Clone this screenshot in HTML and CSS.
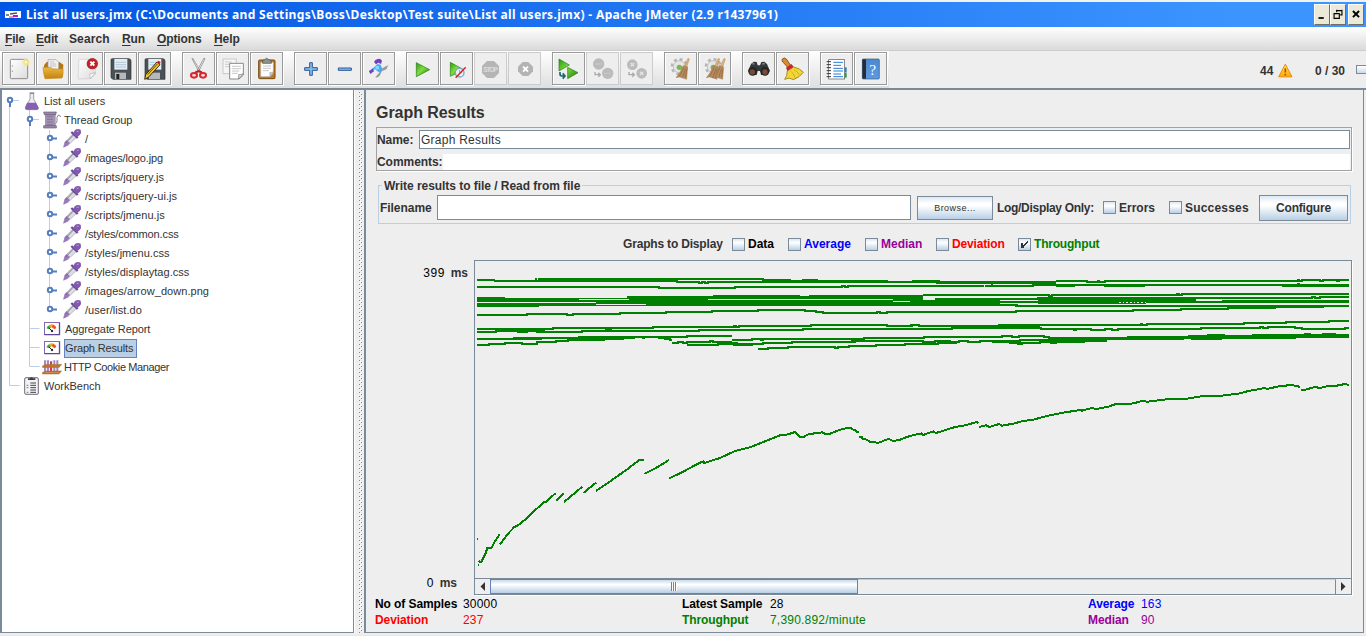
FILE: index.html
```html
<!DOCTYPE html>
<html lang="en">
<head>
<meta charset="utf-8">
<title>Apache JMeter</title>
<link rel="stylesheet" href="styles.css">
</head>
<body>
<svg class="defs" width="0" height="0">
  <defs>
    <linearGradient id="green" x1="0" y1="0" x2="1" y2="1"><stop offset="0" stop-color="#2c9a10"/><stop offset=".45" stop-color="#7fdc3c"/><stop offset="1" stop-color="#1c7a0c"/></linearGradient>
    <linearGradient id="gold" x1="0" y1="0" x2="0" y2="1"><stop offset="0" stop-color="#eab844"/><stop offset="1" stop-color="#c4820c"/></linearGradient>
    <linearGradient id="paper" x1="0" y1="0" x2="1" y2="1"><stop offset="0" stop-color="#fff"/><stop offset="1" stop-color="#dcdcdc"/></linearGradient>
    <linearGradient id="blue" x1="0" y1="0" x2="0" y2="1"><stop offset="0" stop-color="#4a8ad0"/><stop offset="1" stop-color="#5e9ae4"/></linearGradient>
    <linearGradient id="yellow" x1="0" y1="0" x2="0" y2="1"><stop offset="0" stop-color="#ffef50"/><stop offset="1" stop-color="#ffa500"/></linearGradient>
    <pattern id="dots" width="4" height="4" patternUnits="userSpaceOnUse"><path d="M0 0h1v1H0zM2 2h1v1H2z" fill="#7a8a99"/><path d="M1 1h1v1H1zM3 3h1v1H3z" fill="#fff"/></pattern>
    <symbol id="dropper" viewBox="189 120 60 57" overflow="visible">
      <path d="M191 170l4-14 26-27 11 11-27 25z" fill="#dcdce2" stroke="#a9a5b8" stroke-width="2"/>
      <path d="M190 173l4-16 6-7 10 9-8 8z" fill="#9a78bd"/>
      <path d="M197 159l23-24" stroke="#77747f" stroke-width="3"/>
      <path d="M214 126l19 18" stroke="#6a4a9c" stroke-width="7"/>
      <path d="M219 130l6-10q8-5 17-1 3 9-2 15l-9 8z" fill="#8359ad"/><path d="M230 124l6 0" stroke="#b093cf" stroke-width="4"/>
    </symbol>
    <symbol id="gauge" viewBox="132 210 60 57">
      <rect x="133.500" y="217.500" width="45" height="36" fill="#fff" stroke="#8467b3" stroke-width="3"/>
      <path d="M178.500 218v36h-45" fill="none" stroke="#624699" stroke-width="4"/>
      <path d="M139 235q3-8 9-10l6 7-7 6z" fill="#39b54a"/><path d="M147 225q8-4 16 0l-5 7h-7z" fill="#f5a623"/><path d="M160 224q8 3 9 10l-6 4-8-7z" fill="#f2512e"/>
      <path d="M146 233l10 10" stroke="#222" stroke-width="3"/><circle cx="156" cy="243" r="3.500" fill="#222"/>
    </symbol>
    <symbol id="gearbroom" viewBox="372 156 99 99">
      <circle cx="418" cy="200" r="22" fill="none" stroke="#b5b5b5" stroke-width="8" stroke-dasharray="9 8.280"/>
      <circle cx="418" cy="200" r="18" fill="#e6e6e6" stroke="#c0c0c0" stroke-width="3"/>
      <circle cx="418" cy="202" r="8" fill="#72bd4a"/>
    </symbol>
    <symbol id="brush" viewBox="0 0 45 66">
      <path d="M38 1l4 2-8 25-8-2z" fill="#ddb074" stroke="#9d7447"/>
      <path d="M23 23l14 4-3 37-22-7-10 2q13-14 21-36z" fill="#b88b5d" stroke="#8c6640"/>
      <path d="M26 29L12 55M31 32l-9 25M34 34l-4 25" stroke="#8b6644" stroke-width="2"/>
    </symbol>
  </defs>
</svg>

<header class="titlebar">
  <svg class="appicon" viewBox="0 0 16 8"><rect width="16" height="7" fill="#fff"/><path d="M1 4h3M5 3l7-1" stroke="#556" stroke-width="1.500"/><path d="M4 6h5" stroke="#e03060"/><path d="M8 5h5" stroke="#c018c0" stroke-width="2"/></svg>
  <span class="wintitle">List all users.jmx (C:\Documents and Settings\Boss\Desktop\Test suite\List all users.jmx) - Apache JMeter (2.9 r1437961)</span>
  <div class="winbtns">
    <svg viewBox="0 0 16 21"><path d="M4 14.500h6" stroke="#000" stroke-width="2"/></svg>
    <svg viewBox="0 0 16 21"><path d="M6 6h7M6.500 5v3M12.500 5v6h-2M3 9.500h7M3.500 9v6h6V9" fill="none" stroke="#000" stroke-width="1.300"/></svg>
    <svg class="close" viewBox="0 0 16 21"><path d="M4.500 6.500l7 7m0-7l-7 7" stroke="#000" stroke-width="2.200"/></svg>
  </div>
</header>

<nav class="menubar"><span class="m1"><u>F</u>ile</span><span class="m2"><u>E</u>dit</span><span class="m3">Search</span><span class="m4"><u>R</u>un</span><span class="m5"><u>O</u>ptions</span><span class="m6"><u>H</u>elp</span></nav>

<section class="toolbar">
  <div class="tools">
    <div class="toolgroup">
      <div class="tool"><svg viewBox="6 156 99 99"><rect x="31" y="178" width="52" height="58" rx="3" fill="url(#paper)" stroke="#777" stroke-width="2.500"/><path d="M37 196v4m0 12v4" stroke="#999" stroke-width="3"/><circle cx="78" cy="187" r="11" fill="#f5ea80" opacity=".75"/><circle cx="78" cy="187" r="5" fill="#fffde0" stroke="#edda3c" stroke-width="2"/></svg></div>
      <div class="tool"><svg viewBox="108 156 99 99"><path d="M132 196l8-10h38l12 8-2 38h-54z" fill="#b57612"/><path d="M144 206v-27h24l8 8v22z" fill="#f4f4f4" stroke="#999" stroke-width="2"/><path d="M149 186h14M149 192h20M149 198h20" stroke="#aaa" stroke-width="2"/><path d="M129 202h23l6 5h31q2 13-3 27l-51 2q-5-15-6-34z" fill="url(#gold)" stroke="#c88d20" stroke-width="2"/></svg></div>
      <div class="tool"><svg viewBox="210 156 99 99"><path d="M237 178h47l2 45-14 13-38 1z" fill="url(#paper)" stroke="#ccc" stroke-width="2"/><path d="M286 218l-17 4 2 14z" fill="#fff" stroke="#aaa" stroke-width="2"/><circle cx="277" cy="191" r="17" fill="#a83438"/><circle cx="277" cy="191" r="14" fill="#cb1d20"/><path d="M271 185l12 12m0-12l-12 12" stroke="#fff" stroke-width="6"/></svg></div>
      <div class="tool"><svg viewBox="312 156 99 99"><path d="M333 179q0-3 4-3h50q6 1 6 7v55h-54l-6-5z" fill="#4b5256" stroke="#2e3235" stroke-width="2"/><rect x="343" y="177" width="39" height="32" fill="#e2edf5"/><path d="M347 187h31M347 194h31M347 201h31" stroke="#9cb9ce" stroke-width="2"/><rect x="345" y="218" width="33" height="19" fill="#b5b9bb"/><rect x="349" y="222" width="9" height="15" fill="#222"/></svg></div>
      <div class="tool"><svg viewBox="414 156 99 99"><path d="M435 179q0-3 4-3h50q6 1 6 7v55h-54l-6-5z" fill="#4b5256" stroke="#2e3235" stroke-width="2"/><rect x="445" y="177" width="39" height="32" fill="#e2edf5"/><path d="M449 187h31M449 194h31" stroke="#9cb9ce" stroke-width="2"/><rect x="447" y="218" width="33" height="19" fill="#b5b9bb"/><path d="M434 238l3-14 34-38 9 8-35 38z" fill="#f1c32c" stroke="#392c14" stroke-width="3"/><path d="M443 224l29-32" stroke="#6b5116" stroke-width="3"/><path d="M470 187l6-5 6 5-4 7z" fill="#d71e24"/></svg></div>
    </div>
    <div class="toolgroup">
      <div class="tool"><svg viewBox="546 156 99 99"><path d="M576 176l22 42 4-3-24-41zM615 176l-21 42-4-3 22-41z" fill="#f6f6f6" stroke="#777" stroke-width="2"/><ellipse cx="582" cy="226" rx="9" ry="7" fill="#f6dede" stroke="#dd252b" stroke-width="6"/><ellipse cx="609" cy="226" rx="9" ry="7" fill="#f6dede" stroke="#dd252b" stroke-width="6"/><path d="M586 217l10-4 10 4" fill="none" stroke="#cc171c" stroke-width="6"/></svg></div>
      <div class="tool"><svg viewBox="648 156 99 99"><path d="M669 177h40v44h-40z" fill="#f5f5f5" stroke="#b5b5b5" stroke-width="2"/><path d="M675 186h20M675 193h12M675 200h12" stroke="#ccc" stroke-width="3"/><path d="M689 190h41v35l-13 12h-28z" fill="#fff" stroke="#888" stroke-width="3"/><path d="M696 199h27M696 206h27M696 213h22M696 220h17" stroke="#aaa" stroke-width="2"/><path d="M730 222l-14 2v13z" fill="#ddd" stroke="#777" stroke-width="2"/></svg></div>
      <div class="tool"><svg viewBox="750 156 99 99"><rect x="776" y="180" width="49" height="56" rx="3" fill="#c17b19" stroke="#774a0b" stroke-width="3"/><path d="M782 187h38v32l-10 11h-28z" fill="#fff" stroke="#a9a9a9" stroke-width="2"/><path d="M789 198h24M789 205h24M789 212h18" stroke="#aaa" stroke-width="2"/><path d="M820 216l-11 2 1 12z" fill="#ccc" stroke="#777"/><path d="M788 190v-8q3-3 6-3 6-9 12 0 6 0 8 5v6z" fill="#90918b" stroke="#484946" stroke-width="2"/></svg></div>
    </div>
    <div class="toolgroup">
      <div class="tool"><svg viewBox="12 156 99 99"><path d="M59 188h8v15h15v8H67v15h-8v-15H44v-8h15z" fill="#8db8e6" stroke="#285a9b" stroke-width="3"/></svg></div>
      <div class="tool"><svg viewBox="114 156 99 99"><path d="M145 204h39v7h-39z" fill="#8db8e6" stroke="#285a9b" stroke-width="3"/></svg></div>
      <div class="tool"><svg viewBox="216 156 99 99"><path d="M256 232l14-17 8-11 17-9-6 13-14 6-5 12q-7 9-14 6z" fill="#999"/><path d="M252 186q3-8 11-9 9-2 13 5l-3 10-8-4-7 5z" fill="#7341bd"/><path d="M237 213l17-13 8-8 10 2 5 13-5 12-11-6-6-6-13 12z" fill="#4aa8f6"/><path d="M237 214l11-8 4 8-11 8z" fill="#7541bd"/><circle cx="262" cy="203" r="6" fill="#83d8ff"/></svg></div>
    </div>
    <div class="toolgroup">
      <div class="tool"><svg viewBox="348 156 99 99"><path d="M379 188l40 21-40 21z" fill="url(#green)" stroke="#247d17" stroke-width="2"/></svg></div>
      <div class="tool"><svg viewBox="450 156 99 99"><path d="M481 187l40 22-40 20z" fill="url(#green)" stroke="#247d17" stroke-width="2"/><circle cx="509" cy="218" r="13" fill="#eaf2fc" stroke="#7da5cd" stroke-width="4"/><path d="M509 210v8h7" fill="none" stroke="#678" stroke-width="2"/><path d="M497 233l30-31" stroke="#db1721" stroke-width="4"/></svg></div>
      <div class="tool off"><svg viewBox="552 156 99 99"><path d="M591 183h21l15 15v21l-15 15h-21l-15-15v-21z" fill="#b5b5b5"/><text x="601.500" y="216" text-anchor="middle" textLength="44" class="stoptext">STOP</text></svg></div>
      <div class="tool off"><svg viewBox="654 156 99 99"><path d="M698 186h17l14 14v14l-14 14h-17l-14-14v-14z" fill="#b3b3b3"/><path d="M699 200l15 15m0-15l-15 15" stroke="#fff" stroke-width="6"/></svg></div>
    </div>
    <div class="toolgroup">
      <div class="tool"><svg viewBox="36 156 99 99"><path d="M57 177l31 18-31 18zM83 202l31 16-31 18z" fill="url(#green)" stroke="#247d17" stroke-width="2"/><path d="M60 216v7q0 5 6 5h8m-6-8l7 8-7 8" fill="none" stroke="#17686f" stroke-width="5"/></svg></div>
      <div class="tool off"><svg viewBox="138 156 99 99"><circle cx="176" cy="192" r="17" fill="#bbb"/><circle cx="203" cy="220" r="17" fill="#bbb"/><path d="M166 192h20M193 220h20" stroke="#ccc" stroke-width="4" stroke-dasharray="4 2"/><path d="M165 216v8h16m-6-6l6 6-6 6" fill="none" stroke="#aaa" stroke-width="4"/></svg></div>
      <div class="tool off"><svg viewBox="240 156 99 99"><circle cx="277" cy="194" r="16" fill="#bbb"/><circle cx="305" cy="220" r="16" fill="#bbb"/><path d="M272 189l10 10m0-10l-10 10M300 215l10 10m0-10l-10 10" stroke="#e3e3e3" stroke-width="4"/><path d="M267 216v8h16m-6-6l6 6-6 6" fill="none" stroke="#aaa" stroke-width="4"/></svg></div>
    </div>
    <div class="toolgroup">
      <div class="tool"><svg viewBox="372 156 99 99"><use href="#gearbroom" x="372" y="156" width="99" height="99"/><use href="#brush" x="406" y="174" width="45" height="66"/></svg></div>
      <div class="tool"><svg viewBox="474 156 99 99"><use href="#gearbroom" x="474" y="156" width="99" height="99"/><use href="#brush" x="497" y="174" width="45" height="66"/><use href="#brush" x="514" y="174" width="45" height="66"/></svg></div>
    </div>
    <div class="toolgroup">
      <div class="tool"><svg viewBox="606 156 99 99"><path d="M633 192l8-7 9 1 3 10h7l4-10 9-1 8 7 9 21-15 12h-12l-3-12h-7l-3 12h-12l-14-12z" fill="#34383b"/><circle cx="638" cy="214" r="13" fill="#242424"/><circle cx="675" cy="214" r="13" fill="#242424"/><circle cx="637" cy="216" r="8" fill="#7a4b34"/><circle cx="675" cy="216" r="8" fill="#7a4b34"/><path d="M637 191l6 1M667 192l7-1" stroke="#8a8d90" stroke-width="4"/></svg></div>
      <div class="tool"><svg viewBox="708 156 99 99"><path d="M727 177q6-6 12 0l14 21-8 6-19-21z" fill="#d58d34" stroke="#975516" stroke-width="3"/><path d="M742 213l19-12q19 4 29 16-11 15-30 22-12-9-26-1 8-10 8-25z" fill="#f0d638" stroke="#aa8d13" stroke-width="3"/><path d="M738 203l16-11 7 8-19 13z" fill="#c52927"/><path d="M753 214q8 6 12 19m-3-25q10 6 16 17" fill="none" stroke="#b99d1d" stroke-width="2"/></svg></div>
    </div>
    <div class="toolgroup">
      <div class="tool"><svg viewBox="840 156 99 99"><path d="M910 202h10v15h-10z" fill="#2f78df"/><path d="M910 218h10v15h-10z" fill="#18ad2b"/><rect x="866" y="179" width="48" height="58" fill="#fff" stroke="#555" stroke-width="2"/><path d="M880 187h29M880 196h23M880 205h29M880 213h29M880 222h23M880 230h29" stroke="#2b7bd6" stroke-width="3"/><path d="M860 185h13M860 194h13M860 203h13M860 212h13M860 221h13M860 230h13" stroke="#333" stroke-width="3"/></svg></div>
      <div class="tool"><svg viewBox="942 156 99 99"><rect x="967" y="177" width="51" height="60" rx="3" fill="url(#blue)" stroke="#345a80" stroke-width="2"/><path d="M967 178h11v58h-11z" fill="#292d32"/><text x="998" y="225" text-anchor="middle" class="helptext">?</text></svg></div>
    </div>
  </div>
  <div class="status"><span class="s1">44</span><svg class="warn" viewBox="233 189 45 44"><path d="M255 192l20 38h-40z" fill="url(#yellow)" stroke="#e88b10" stroke-width="3" stroke-linejoin="round"/><path d="M255 204v13m0 4v5" stroke="#b44d12" stroke-width="5"/></svg><span class="s2">0 / 30</span><i class="lamp"></i></div>
</section>

<main class="workspace">
  <aside class="tree">
    <svg class="guides" viewBox="0 90 352 542">
      <path d="M9.500 104v281.500h10M29.500 109v257.500h10M29.500 328.500h10M29.500 347.500h10M49.500 130v178M12 100.500h7M32 119.500h7" fill="none" stroke="#b8cfe5"/>
      <g fill="#fff" stroke="#557fbf" stroke-width="2"><path d="M10 103v4M30 122v4"/><circle cx="10" cy="100" r="2.200"/><circle cx="30" cy="119" r="2.200"/>
      <path d="M53 138.500h4M53 157.500h4M53 176.500h4M53 195.500h4M53 214.500h4M53 233.500h4M53 252.500h4M53 271.500h4M53 290.500h4M53 309.500h4"/>
      <circle cx="50" cy="138" r="2.200"/><circle cx="50" cy="157" r="2.200"/><circle cx="50" cy="176" r="2.200"/><circle cx="50" cy="195" r="2.200"/><circle cx="50" cy="214" r="2.200"/><circle cx="50" cy="233" r="2.200"/><circle cx="50" cy="252" r="2.200"/><circle cx="50" cy="271" r="2.200"/><circle cx="50" cy="290" r="2.200"/><circle cx="50" cy="309" r="2.200"/></g>
    </svg>
    <div class="row l0"><svg viewBox="72 6 60 57"><path d="M90 10v17L76 53q-1 6 5 6h29q6-1 4-7l-13-25V10z" fill="#eeebf4" stroke="#777382" stroke-width="2"/><path d="M81 38h27l8 15q0 6-5 6H80q-6-3-4-8z" fill="#8660b2"/><path d="M89 9h14" stroke="#777" stroke-width="3"/></svg><span>List all users</span></div>
    <div class="row l1"><svg viewBox="126 63 60 57"><path d="M135 72h32v38h-32z" fill="#a293b1"/><path d="M131 66h38l-2 8h-34zM131 107h38v7h-38z" fill="#9a8aa8" stroke="#665772" stroke-width="2"/><path d="M141 80h18M141 88h18M141 96h18M141 104h18" stroke="#786888" stroke-width="2"/><path d="M166 101q5-1 5-9V82q2-9 8-6l3 5" fill="none" stroke="#898191" stroke-width="3"/></svg><span>Thread Group</span></div>
    <div class="row l2"><svg><use href="#dropper"/></svg><span>/</span></div>
    <div class="row l2 tight"><svg><use href="#dropper"/></svg><span>/images/logo.jpg</span></div>
    <div class="row l2"><svg><use href="#dropper"/></svg><span>/scripts/jquery.js</span></div>
    <div class="row l2"><svg><use href="#dropper"/></svg><span>/scripts/jquery-ui.js</span></div>
    <div class="row l2"><svg><use href="#dropper"/></svg><span>/scripts/jmenu.js</span></div>
    <div class="row l2 tight"><svg><use href="#dropper"/></svg><span>/styles/common.css</span></div>
    <div class="row l2"><svg><use href="#dropper"/></svg><span>/styles/jmenu.css</span></div>
    <div class="row l2"><svg><use href="#dropper"/></svg><span>/styles/displaytag.css</span></div>
    <div class="row l2"><svg><use href="#dropper"/></svg><span>/images/arrow_down.png</span></div>
    <div class="row l2"><svg><use href="#dropper"/></svg><span>/user/list.do</span></div>
    <div class="row l1 gauge"><svg><use href="#gauge"/></svg><span>Aggregate Report</span></div>
    <div class="row l1 gauge"><svg><use href="#gauge"/></svg><span class="selected">Graph Results</span></div>
    <div class="row l1 cookie"><svg viewBox="126 324 60 57"><path d="M135 331v34M144 331v34M163 331v34M172 331v34" stroke="#9d88c2" stroke-width="6"/><path d="M153 334v34" stroke="#dc3055" stroke-width="6"/><path d="M139 329v32M158 329v32M176 329v32" stroke="#d9d7e5" stroke-width="2"/><path d="M127 350l10-5h45l-6 6h-49M127 369l10-5h45l-6 7h-49" fill="#cf8a45" stroke="#b5702f" stroke-width="4"/></svg><span>HTTP Cookie Manager</span></div>
    <div class="row l0"><svg viewBox="72 381 60 57"><rect x="74" y="383" width="41" height="50" rx="4" fill="#f3f2f5" stroke="#746c7c" stroke-width="3"/><path d="M84 390h22v-5h-7l-4-4-5 4h-6z" fill="#3d3d42"/><path d="M91 399h17M91 406h17M91 413h17M91 420h17M91 427h17" stroke="#444" stroke-width="3"/><path d="M80 406h5M80 413h5M80 427h5" stroke="#3f9c50" stroke-width="3"/></svg><span>WorkBench</span></div>
  </aside>
  <div class="splitter"><svg class="grip"><rect width="4" height="541" fill="url(#dots)"/></svg></div>
  <section class="panel">
    <h1>Graph Results</h1>
    <div class="namebox">
      <div class="namerow"><label>Name:</label><div class="field">Graph Results</div></div>
      <div class="commentrow"><label>Comments:</label><div></div></div>
    </div>
    <div class="filegroup">
      <span class="legend">Write results to file / Read from file</span>
      <label>Filename</label><div class="fileinput"></div>
      <div class="btn browse">Browse...</div>
      <b class="logonly">Log/Display Only:</b>
      <i class="check"></i><b class="errors">Errors</b>
      <i class="check"></i><b class="succ">Successes</b>
      <div class="btn configure">Configure</div>
    </div>
    <div class="series">
      <b class="g0">Graphs to Display</b>
      <i class="check"></i><b class="g1">Data</b>
      <i class="check"></i><b class="g2">Average</b>
      <i class="check"></i><b class="g3">Median</b>
      <i class="check"></i><b class="g4">Deviation</b>
      <i class="check"><svg viewBox="0 0 11 11"><path d="M2 4h2v2h1V5h1V4h1V3h1V2h1v2H8v1H7v1H6v1H5v2H2z" fill="#333"/></svg></i><b class="g5">Throughput</b>
    </div>
    <div class="graph">
      <div class="axis"><div>399 <b>ms</b></div><div class="zero">0 <b>ms</b></div></div>
      <div class="plot">
        <svg class="lines" viewBox="475 261 876 317">
          <g transform="translate(470 255) scale(.333333)" fill="none" stroke="#008000" stroke-width="6">
            <path d="M21 75H72V78M195 72h6M204 72H879V75H960V78H998V75H1040V78H1250V81M72 78H620V81H686V84H695V81H705V84H714V81H1325"/>
            <path d="M21 96H567V99H795V96H1116V93H1125V96H1134V93H1350"/>
            <path d="M21 126H105V129H471V123H729V120H990V123H1016V120H1325V153H207V156H21z" fill="#008000" stroke="none"/>
            <path d="M327 133.500h149M714 133.500h554M21 142.500h357M378 148.500h150M1268 139.500h56" stroke="#eee" stroke-width="3"/>
            <path d="M21 180H170V177H291V180H309V177H450V174H588V171H726V168H864V165H1005V168H1038V171H1058V174H1220V171H1230V174H1250V171H1320"/>
            <path d="M21 222H249V219H549V216H792V213H798V216H807V213H1023V210H1250V213H1325V210H1340M21 231H78V228H144V231H171V228H201V231H336V228H687V225H998V222H1350M78 227h148M404 222h22"/>
            <path d="M21 252H212V249M129 249H327V246H650V243H785M21 270H57V267H105V264H155V267H165V267H201V261H258V258H294V255H402V252H459V249H495M327 249H417M515 249h10M564 249H585V252H600V255H605M606 264H624V261H640V264H650V261H720V258H730V261H785M650 270H745V267H793V270H845V267H878V264H966V261H1156V258H1350M744 264h57v3h65M785 255H845V252H873V255H880V252H1182V249H1320M1142 255h40v3M864 282H894V279H954V276H1030V273V276H1095V279H1103V276H1137V273H1218V270H1305V267H1350"/>
          </g>
          <g transform="translate(910 255) scale(.333333)" fill="none" stroke="#008000" stroke-width="6">
            <path d="M0 81H438M6 78h84M78 84h360M438 78H530V81H563V78H567V81H585V78H1165V75H1168V78H1176V75H1230V78H1238V75H1282V78H1287V75H1317"/>
            <path d="M0 93H222M225 93H370V90H385V90H1165V87H1168V90H1173V90H1317M243 90h6M385 88h53M438 93h57M582 93h123M1173 91h144M1116 93h201"/>
            <path d="M0 129h39M0 126h39M0 123h39M39 120H417V123H426V120H802V117H808V120H816V117H1317M75 132H385V129H1205V126H1214V129H1230V126H1317"/>
            <path d="M0 132h39v3h231v3h115v-9h473v9h78v-3h381v9h-610v3H385v-3H270v3h51v9h-6v-6H0z" fill="#008000" stroke="none"/>
            <path d="M385 133h473M270 141h1047M936 138h381M0 144h270M0 150H321V153H1317"/>
            <path d="M627 144h83" stroke="#eee" stroke-width="3" stroke-dasharray="5 6"/>
            <path d="M0 171H318V168H669V165H813V162H954V159H1098M954 156h285V153"/>
            <path d="M0 210H27V213H267V210H693V207H697V210H711V207H1002V204H1128V201H1257V198H1317M0 222H126V219H393V222H492V225H498V222H543V225H585V222H605V225H623V222H873V219H1050V216H1059V219H1074V216H1155V219H1176V222H1305V219H1317M126 216h264M378 213h12"/>
            <path d="M0 249H42V246H275V243H306V246H327V243H402V246H417V249H654V246H837V243H895V240H942V243H1030V240H1317M417 252H820V249H843V246H1317M843 252h90v-3h225M654 249h189M933 243h384M1182 237h20M1236 237h42M252 243v3"/>
            <path d="M0 258H38V261H75V258H120V261H147V258H174V261H210V258H330V255H422V258H587V252M0 267H85V264H140M246 261h54v3h90v-3h33v3h15v-3h87M321 267h18"/>
          </g>
          <g transform="translate(350 420) scale(.333333)" fill="none" stroke="#008000" stroke-width="6">
            <path d="M381 357h4M384 435h4M387 423l3 3h4l7-15 6-11 5-16h12l8-15 17-27M450 373L474 341L492 322L504 316L530 295L558 268L582 247L588 246L617 219M619 243l22-22M642 246l55-46M700 219l38-31M738 213L776 187L830 149L868 120H882M883 162l38-20 36-22M957 175L990 160L1044 131L1060 124L1063 129L1110 114L1155 93L1200 82L1240 66L1290 46L1315 43L1335 36L1340 40L1350 50H1362L1375 43L1400 39L1417 37L1425 41H1440L1465 31L1490 24L1503 24"/>
          </g>
          <g transform="translate(850 370) scale(.333333)" fill="none" stroke="#008000" stroke-width="6">
            <path d="M3 175L10 179H16L22 187H26M27 200H35L38 207L50 209L60 215H70L82 219L94 215L104 211L117 207L130 213L150 209L165 203L190 195L215 190L219 195L250 184L258 189L290 179L315 171L350 165L380 156L385 159M387 170H392L408 166L418 171L448 162L456 167L490 161L515 154L550 149L590 138L640 128L690 120L696 122L725 114L740 117L775 110L795 103H830L855 99L875 93L893 95L925 91L965 86H1010L1060 78L1115 77L1165 71L1195 63L1245 54L1252 57L1285 49L1305 47L1325 45L1345 49L1350 53M1353 60H1362L1395 51L1410 54L1435 48L1460 47L1485 42L1496 45"/>
          </g>
        </svg>
        <div class="scrollbar"><span class="arrow"><svg viewBox="0 0 15 15"><path d="M10 3v9L5.500 7.500z" fill="#333"/></svg></span><span class="thumb"><i></i></span><span class="track"></span><span class="arrow"><svg viewBox="0 0 15 15"><path d="M5 3v9l4.500-4.500z" fill="#333"/></svg></span></div>
      </div>
    </div>
    <div class="stats">
      <b>No of Samples</b><span>30000</span><b>Latest Sample</b><span>28</span><b class="avg">Average</b><span class="avg">163</span>
      <b class="dev">Deviation</b><span class="dev">237</span><b class="thr">Throughput</b><span class="thr">7,390.892/minute</span><b class="med">Median</b><span class="med">90</span>
    </div>
  </section>
</main>
</body>
</html>
```
FILE: styles.css
```css
* { box-sizing: border-box; }
body { margin: 0; width: 1366px; height: 636px; overflow: hidden; background: #eee; color: #333; font: 12px "Liberation Sans", Arial, sans-serif; white-space: nowrap; border-bottom: 1px solid #ece9d8; }
.defs { position: absolute; }
svg { display: block; flex: none; }

.titlebar { height: 27px; border-top: 2px solid #f3f3ee; background: linear-gradient(90deg, #0054e3, #3c94ff 90%); display: flex; align-items: center; padding-left: 5px; }
.appicon { width: 16px; height: 8px; }
.wintitle { margin-left: 5px; font: bold 12px "Noto Sans", sans-serif; color: #fff; letter-spacing: .345px; line-height: 24px; }
.winbtns { margin-left: auto; display: flex; padding-right: 2px; }
.winbtns svg { width: 16px; height: 21px; background: #ece9d8; border: 1px solid; border-color: #fff #716f64 #716f64 #fff; }
.winbtns .close { margin-left: 2px; }

.menubar { height: 24px; background: linear-gradient(#fff, #dadada); border-bottom: 1px solid #ccc; display: flex; align-items: center; font-weight: bold; padding-left: 5px; }
.menubar span { letter-spacing: -.1px; }
.menubar .m1, .menubar .m2 { letter-spacing: -.2px; }
.menubar .m3 { letter-spacing: .1px; }
.menubar u { text-underline-offset: 2px; }
.m1 { width: 31px; } .m2 { width: 33px; } .m3 { width: 53px; } .m4 { width: 35px; } .m5 { width: 57px; }

.toolbar { height: 37px; display: flex; }
.tools { width: 889px; height: 37px; display: flex; gap: 10px; padding: 1px 0 0 2px; background: linear-gradient(#fff, #dedede); }
.toolgroup { display: flex; gap: 1px; }
.toolgroup + .toolgroup { margin-left: 1px; }
.tool { width: 33px; height: 33px; background: #eee; box-shadow: inset 0 0 0 1px #999, inset 2px 2px 0 #fff, 1px 1px 0 #fff; }
.tool.off { box-shadow: inset 0 0 0 1px #ccc; }
.tool svg { width: 33px; height: 33px; }
.stoptext { font: bold 20px "Liberation Sans", sans-serif; fill: #ddd; }
.helptext { font: 46px "Liberation Serif", serif; fill: #fff; }
.status { flex: 1; display: flex; align-items: center; font-weight: bold; padding-left: 371px; padding-top: 3px; }
.status .warn { width: 15px; height: 15px; margin-top: -1px; }
.s1 { width: 18px; }
.s2 { width: 41px; margin-left: 22px; }
.lamp { width: 10px; height: 9px; margin-top: -4px; border: 1px solid #7a8a99; border-right: 0; background: linear-gradient(#fff, #c9dbea); }

.workspace { height: 545px; display: flex; border-top: 2px solid #7a8a99; }
.tree { position: relative; width: 354px; border-left: 2px solid #7a8a99; border-right: 1px solid #7a8a99; border-bottom: 1px solid #7a8a99; background: #fff; padding-top: 2px; }
.guides { position: absolute; left: -2px; top: 0; width: 352px; height: 542px; }
.row { position: relative; height: 19px; display: flex; align-items: center; font-size: 11px; letter-spacing: 0; }
.row svg { width: 20px; height: 19px; overflow: visible; }
.row span { height: 19px; line-height: 19px; }
.l0 { padding-left: 22px; } .l1 { padding-left: 40px; } .l2 { padding-left: 61px; letter-spacing: .05px; }
.l1 span, .l2 span { margin-left: 2px; }
.gauge { padding-left: 42px; letter-spacing: -.1px; }
.tight { letter-spacing: -.13px; }
.cookie { letter-spacing: -.38px; }
.gauge span { margin-left: 0; padding-left: 1px; }
.row .selected { width: 73px; background: #b8cfe5; box-shadow: inset 0 0 0 1px #6382bf; letter-spacing: -.15px; }

.splitter { width: 10px; padding: 2px 0 0 4px; border-left: 1px solid #fff; }
.grip { width: 4px; height: 541px; }
.panel { width: 1000px; border-left: 2px solid #7a8a99; border-right: 1px solid #7a8a99; border-bottom: 1px solid #7a8a99; padding: 0 11px 0 10px; }
.panel h1 { margin: 0; height: 37px; padding-top: 13px; font: bold 16px/19px "Liberation Sans", sans-serif; letter-spacing: -.05px; }
.namebox { height: 44px; border: 1px solid #a2a2a2; padding: 2px 1px 1px 0; box-shadow: 1px 1px 0 #fff; }
.namebox label, .filegroup label { font-weight: bold; letter-spacing: -.05px; }
.namerow { display: flex; height: 19px; align-items: center; }
.namerow label { width: 42px; }
.field { flex: 1; height: 19px; background: #fff; border: 1px solid #7a8a99; padding-left: 1px; line-height: 18px; letter-spacing: .25px; }
.commentrow { display: flex; height: 16px; margin-top: 5px; align-items: center; }
.commentrow label { width: 66px; }
.commentrow div { flex: 1; height: 16px; background: #fff; }
.filegroup { position: relative; margin: 14px 1px 0 2px; height: 39px; border: 1px solid #b8cfe5; display: flex; align-items: center; padding: 6px 0 0 1px; }
.legend { position: absolute; left: 3px; top: -8px; padding: 0 2px; background: #eee; font-weight: bold; line-height: 16px; letter-spacing: -.04px; }
.filegroup label { width: 57px; }
.fileinput { width: 474px; height: 25px; background: #fff; border: 1px solid #7a8a99; }
.btn { display: flex; align-items: center; justify-content: center; border: 1px solid #7a8a99; background: linear-gradient(#dde8f3, #fff 30%, #fff 40%, #b8cfe5); }
.browse { width: 76px; height: 24px; margin-left: 6px; font-size: 9px; letter-spacing: .45px; }
.logonly { width: 106px; margin-left: 4px; letter-spacing: -.3px; }
.check { width: 13px; height: 13px; border: 1px solid #7a8a99; background: linear-gradient(#dde8f3, #fff 35%, #b8cfe5); flex: none; }
.check svg { width: 11px; height: 11px; }
.errors { width: 50px; margin-left: 3px; }
.succ { width: 74px; margin-left: 3px; letter-spacing: .2px; }
.configure { width: 89px; height: 26px; margin-left: auto; margin-right: 2px; font-weight: bold; letter-spacing: -.2px; }
.series { height: 36px; display: flex; align-items: center; padding: 4px 0 0 247px; }
.series b { margin-left: 3px; }
.series .g0 { width: 109px; margin-left: 0; letter-spacing: -.18px; }
.g1 { width: 40px; color: #000; } .g2 { width: 61px; color: #00f; } .g3 { width: 55px; color: #909; } .g4 { width: 66px; color: #f00; letter-spacing: -.15px; } .g5 { color: #008000; letter-spacing: -.2px; }
.graph { display: flex; height: 335px; }
.axis { width: 98px; display: flex; flex-direction: column; justify-content: space-between; padding: 6px 6px 5px 0; color: #000; text-align: right; letter-spacing: .5px; word-spacing: 2px; }
.axis b { color: #333; letter-spacing: 0; }
.axis .zero { padding-right: 11px; }
.plot { width: 878px; border: 1px solid #7a8a99; box-shadow: 1px 1px 0 #fff; }
.lines { width: 876px; height: 317px; shape-rendering: crispEdges; }
.scrollbar { height: 16px; border-top: 1px solid #7a8a99; display: flex; }
.arrow { width: 15px; }
.arrow svg { width: 15px; height: 15px; }
.thumb { width: 368px; border: 1px solid #6382bf; background: linear-gradient(#c8daeb, #fff 35%, #b8cfe5); display: flex; justify-content: center; align-items: center; }
.thumb i { width: 6px; height: 9px; background: repeating-linear-gradient(90deg, #6382bf 0 1px, #fff 1px 2px); }
.track { flex: 1; border-top: 1px solid #b8cfe5; border-right: 1px solid #7a8a99; }
.stats { display: grid; grid-template-columns: 88px 219px 88px 318px 53px 1fr; grid-auto-rows: 16px; line-height: 16px; color: #000; margin: 1px 0 0 -1px; }
.stats b { letter-spacing: -.08px; }
.stats span { letter-spacing: .2px; }
.stats .avg { color: #00f; } .stats .dev { color: #f00; } .stats .thr { color: #008000; } .stats .med { color: #909; }
```
